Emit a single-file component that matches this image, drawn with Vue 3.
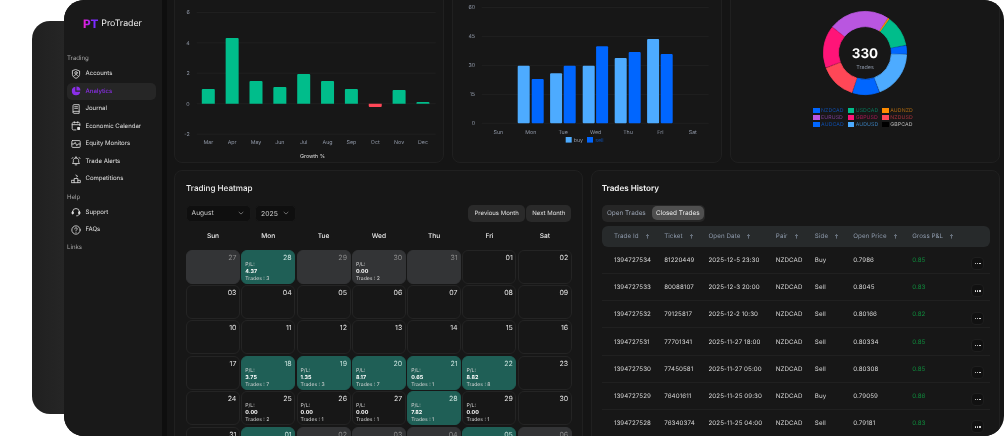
<script setup>
const navTrading = [
  { label: 'Accounts', icon: 'accounts' },
  { label: 'Analytics', icon: 'analytics', active: true },
  { label: 'Journal', icon: 'journal' },
  { label: 'Economic Calendar', icon: 'calendar' },
  { label: 'Equity Monitors', icon: 'equity' },
  { label: 'Trade Alerts', icon: 'alerts' },
  { label: 'Competitions', icon: 'competitions' },
]
const navHelp = [
  { label: 'Support', icon: 'support' },
  { label: 'FAQs', icon: 'faq' },
]

const growthGrid = [
  { v: '6', y: 12.5 }, { v: '4', y: 42.8 }, { v: '2', y: 73.2 }, { v: '0', y: 103.7 }, { v: '-2', y: 134.2 },
]
const growthBars = [
  ['Mar', 89], ['Apr', 38], ['May', 81], ['Jun', 87], ['Jul', 74], ['Aug', 81], ['Sep', 89], ['Oct', 107], ['Nov', 90], ['Dec', 102],
].map(([m, t], i) => ({ m, t, x: 208.6 + i * 23.85 }))

const dayGrid = [
  { v: '60', y: 7.5 }, { v: '45', y: 36.4 }, { v: '30', y: 65.4 }, { v: '15', y: 94.4 }, { v: '0', y: 123.3 },
]
const dayLabels = ['Sun', 'Mon', 'Tue', 'Wed', 'Thu', 'Fri', 'Sat'].map((d, i) => ({ d, x: 498.7 + i * 32.4 }))
const dayBars = [
  { x: 518, t: 65.7, c: '#4dabff' }, { x: 532, t: 79, c: '#0066ff' },
  { x: 550.4, t: 73.3, c: '#4dabff' }, { x: 564, t: 65.7, c: '#0066ff' },
  { x: 583, t: 65.7, c: '#4dabff' }, { x: 596.4, t: 46.3, c: '#0066ff' },
  { x: 615, t: 58, c: '#4dabff' }, { x: 629, t: 52, c: '#0066ff' },
  { x: 647.4, t: 39, c: '#4dabff' }, { x: 661, t: 54, c: '#0066ff' },
]

function polar(r, deg) {
  const a = ((deg - 90) * Math.PI) / 180
  return `${(45 + r * Math.cos(a)).toFixed(2)} ${(45 + r * Math.sin(a)).toFixed(2)}`
}
function arc(from, to, ro, ri) {
  const large = to - from > 180 ? 1 : 0
  return `M${polar(ro, from)}A${ro} ${ro} 0 ${large} 1 ${polar(ro, to)}L${polar(ri, to)}A${ri} ${ri} 0 ${large} 0 ${polar(ri, from)}Z`
}
const donut = [
  [-51, 33, '#b956e0'], [33.9, 35.4, '#ff8c00'], [36.2, 78.5, '#00bd8b'], [80, 91, '#0066ff'], [92.5, 159, '#4dabff'],
  [160.5, 197, '#0066ff'], [198.5, 248.5, '#ff4757'], [250, 308, '#ff1478'],
].map(([a, b, c]) => ({ c, d: arc(a, b, 41.6, 26.4) }))

const legend = [
  ['NZDCAD', '#0066ff', '#0e4fb0'], ['USDCAD', '#00bd8b', '#067a5c'], ['AUDNZD', '#ff8c00', '#b06a10'],
  ['EURUSD', '#b956e0', '#7d3f98'], ['GBPUSD', '#ff1478', '#a81a56'], ['NZDUSD', '#ff4757', '#a8323c'],
  ['AUDCAD', '#0066ff', '#0e4fb0'], ['AUDUSD', '#4dabff', '#3a7db8'], ['GBPCAD', '#000000', '#bdbdbd'],
].map(([name, swatch, text]) => ({ name, swatch, text }))

const weekdays = ['Sun', 'Mon', 'Tue', 'Wed', 'Thu', 'Fri', 'Sat']
const cell = (d, kind = '', pl = null, tr = null) => ({ d, kind, pl, tr })
const cells = [
  cell('27', 'muted'), cell('28', 'win', '4.37', 3), cell('29', 'muted'), cell('30', 'muted', '0.00', 2), cell('31', 'muted'), cell('01'), cell('02'),
  cell('03'), cell('04'), cell('05'), cell('06'), cell('07'), cell('08'), cell('09'),
  cell('10'), cell('11'), cell('12'), cell('13'), cell('14'), cell('15'), cell('16'),
  cell('17'), cell('18', 'win', '3.75', 7), cell('19', 'win', '1.35', 3), cell('20', 'win', '8.17', 7), cell('21', 'win', '0.65', 1), cell('22', 'win', '8.82', 8), cell('23'),
  cell('24'), cell('25', '', '0.00', 2), cell('26', '', '0.00', 1), cell('27', '', '0.00', 1), cell('28', 'win', '7.82', 1), cell('29', '', '0.00', 1), cell('30'),
  cell('31'), cell('01', 'win'), cell('02', 'muted'), cell('03', 'muted'), cell('04', 'muted'), cell('05', 'win'), cell('06', 'muted'),
]

const columns = ['Trade Id', 'Ticket', 'Open Date', 'Pair', 'Side', 'Open Price', 'Gross P&L']
const trades = [
  ['1394727534', '81220449', '2025-12-5 23:30', 'NZDCAD', 'Buy', '0.7986', '0.85'],
  ['1394727533', '80088107', '2025-12-3 20:00', 'NZDCAD', 'Sell', '0.8045', '0.83'],
  ['1394727532', '79125817', '2025-12-2 10:30', 'NZDCAD', 'Sell', '0.80166', '0.82'],
  ['1394727531', '77701341', '2025-11-27 18:00', 'NZDCAD', 'Sell', '0.80334', '0.85'],
  ['1394727530', '77450581', '2025-11-27 05:00', 'NZDCAD', 'Sell', '0.80308', '0.85'],
  ['1394727529', '76401611', '2025-11-25 09:30', 'NZDCAD', 'Buy', '0.79059', '0.86'],
  ['1394727528', '76340374', '2025-11-25 04:00', 'NZDCAD', 'Sell', '0.79181', '0.83'],
]
</script>

<template>
  <div class="stage">
    <div class="back-window"></div>
    <div class="window">
      <aside class="sidebar">
        <div class="logo"><span class="logo-mark">PT</span><span class="logo-name">ProTrader</span></div>
        <div class="section first">Trading</div>
        <div v-for="n in navTrading" :key="n.label" class="nav" :class="{ active: n.active }">
          <svg class="ico" viewBox="0 0 12 12" fill="none" stroke="currentColor" stroke-width="1" stroke-linecap="round" stroke-linejoin="round">
            <template v-if="n.icon === 'accounts'">
              <path d="M6 .8 10.3 2.4V6.4C10.3 8.8 8.3 10.4 6 11.2 3.7 10.4 1.7 8.8 1.7 6.4V2.4Z" />
              <circle cx="6" cy="4.6" r="1.5" />
              <path d="M3.6 8.4C4.2 7.2 5 6.8 6 6.8S7.8 7.2 8.4 8.4" />
            </template>
            <template v-else-if="n.icon === 'analytics'">
              <path d="M5.2.9A5.1 5.1 0 1 0 11.1 6.8H5.2Z" fill="currentColor" stroke="none" />
              <path d="M6.5.7A4.9 4.9 0 0 1 11.3 5.5H6.5Z" fill="currentColor" stroke="none" />
            </template>
            <template v-else-if="n.icon === 'journal'">
              <path d="M2.4 9.6V1.9C2.4 1.2 2.9.8 3.5.8H9.8V11.2H3.5C2.9 11.2 2.4 10.6 2.4 9.9S2.9 8.8 3.5 8.8H9.8" />
              <path d="M4.4 3.2H7.8M4.4 5.2H7.8" />
            </template>
            <template v-else-if="n.icon === 'calendar'">
              <path d="M6 10.7H3C2 10.7 1.4 10 1.4 9.1V3.2C1.4 2.3 2 1.7 3 1.7H9C10 1.7 10.6 2.3 10.6 3.2V5.6" />
              <path d="M1.4 4.4H10.6M3.9.8V2.4M8.1.8V2.4" />
              <rect x="7.4" y="7.3" width="3.4" height="3.4" rx=".7" fill="currentColor" stroke="none" />
            </template>
            <template v-else-if="n.icon === 'equity'">
              <rect x="1" y="1.9" width="10" height="8.2" rx="1" />
              <path d="M1 6H3.6L5 4 7 8 8.4 6H11" />
            </template>
            <template v-else-if="n.icon === 'alerts'">
              <path d="M6 2.2C8 2.2 9.2 3.7 9.2 5.4V7.4L10.2 9H1.8L2.8 7.4V5.4C2.8 3.7 4 2.2 6 2.2Z" />
              <path d="M5 10.6H7M1.2 3 2.2 1.8M10.8 3 9.8 1.8M6 .8V2.2" />
            </template>
            <template v-else>
              <path d="M.8 10.4H11.2V7.6H8.2V5.4H3.8V7.6H.8Z" />
              <path d="M3.8 10.4V7.6M8.2 10.4V7.6M6 1.2 6.7 2.5 8 2.7 7 3.6" />
            </template>
          </svg>
          <span>{{ n.label }}</span>
        </div>
        <div class="section">Help</div>
        <div v-for="n in navHelp" :key="n.label" class="nav">
          <svg class="ico" viewBox="0 0 12 12" fill="none" stroke="currentColor" stroke-width="1" stroke-linecap="round" stroke-linejoin="round">
            <template v-if="n.icon === 'support'">
              <path d="M2 8V5.8A4 4 0 0 1 10 5.8V8" />
              <path d="M10 8C10 9.7 8.6 10.6 6.8 10.6" />
              <rect x="1.2" y="5.6" width="1.6" height="2.8" rx=".7" fill="currentColor" />
              <rect x="9.2" y="5.6" width="1.6" height="2.8" rx=".7" fill="currentColor" />
            </template>
            <template v-else>
              <circle cx="6" cy="6" r="5" />
              <path d="M4.5 4.7C4.5 3.8 5.2 3.3 6 3.3S7.5 3.8 7.5 4.6C7.5 5.7 6 5.7 6 6.9" />
              <path d="M6 8.7V8.8" />
            </template>
          </svg>
          <span>{{ n.label }}</span>
        </div>
        <div class="section">Links</div>
      </aside>

      <div class="rule"></div>

      <main class="main">
        <div class="top-row">
          <section class="card">
            <svg class="chart" viewBox="175.3 -11 268 173.3" width="268" height="173.3">
              <g v-for="g in growthGrid" :key="g.v">
                <line x1="197" x2="436" :y1="g.y" :y2="g.y" class="grid" />
                <text x="190" :y="g.y + 2" text-anchor="end" class="axis">{{ g.v }}</text>
              </g>
              <g v-for="b in growthBars" :key="b.m">
                <path v-if="b.t > 103.7" :d="`M${b.x - 6.5} 103.7H${b.x + 6.5}V${b.t - 1}Q${b.x + 6.5} ${b.t} ${b.x + 5.5} ${b.t}H${b.x - 5.5}Q${b.x - 6.5} ${b.t} ${b.x - 6.5} ${b.t - 1}Z`" fill="#ff4757" />
                <path v-else :d="`M${b.x - 6.5} 103.7V${b.t + 1}Q${b.x - 6.5} ${b.t} ${b.x - 5.5} ${b.t}H${b.x + 5.5}Q${b.x + 6.5} ${b.t} ${b.x + 6.5} ${b.t + 1}V103.7Z`" fill="#00bd8b" />
                <text :x="b.x" y="144" text-anchor="middle" class="axis">{{ b.m }}</text>
              </g>
              <text x="312.8" y="158" text-anchor="middle" class="axis-title">Growth %</text>
            </svg>
          </section>
          <section class="card">
            <svg class="chart" viewBox="453.3 -11 268 173.3" width="268" height="173.3">
              <g v-for="g in dayGrid" :key="g.v">
                <line x1="482" x2="709" :y1="g.y" :y2="g.y" class="grid" />
                <text x="475.4" :y="g.y + 2" text-anchor="end" class="axis">{{ g.v }}</text>
              </g>
              <rect v-for="(b, i) in dayBars" :key="i" :x="b.x" :y="b.t" width="12" :height="123.3 - b.t" rx="1" :fill="b.c" />
              <text v-for="l in dayLabels" :key="l.d" :x="l.x" y="134" text-anchor="middle" class="axis">{{ l.d }}</text>
              <rect x="566" y="137" width="6" height="5.6" fill="#4dabff" />
              <text x="574" y="142.2" class="axis">buy</text>
              <rect x="587.3" y="137" width="6" height="5.6" fill="#0066ff" />
              <text x="595.5" y="142.2" class="axis sell">sell</text>
            </svg>
          </section>
          <section class="card donut-card">
            <svg class="donut" viewBox="0 0 90 90" width="90" height="90">
              <path v-for="(s, i) in donut" :key="i" :d="s.d" :fill="s.c" :stroke="s.c" stroke-width=".8" stroke-linejoin="round" />
              <text x="45" y="49.8" text-anchor="middle" class="donut-num">330</text>
              <text x="45" y="60.6" text-anchor="middle" class="donut-sub">Trades</text>
            </svg>
            <div class="legend">
              <div v-for="l in legend" :key="l.name" class="legend-item">
                <i class="swatch" :style="{ background: l.swatch }"></i>
                <span :style="{ color: l.text }">{{ l.name }}</span>
              </div>
            </div>
          </section>
        </div>

        <div class="bottom-row">
          <section class="card heat">
            <h2 class="title">Trading Heatmap</h2>
            <div class="toolbar">
              <div class="select month">August
                <svg viewBox="0 0 8 8" width="6" height="6" fill="none" stroke="#8a8a8a" stroke-width="1"><path d="M1 2.6 4 5.4 7 2.6" /></svg>
              </div>
              <div class="select year">2025
                <svg viewBox="0 0 8 8" width="6" height="6" fill="none" stroke="#8a8a8a" stroke-width="1"><path d="M1 2.6 4 5.4 7 2.6" /></svg>
              </div>
              <div class="btns">
                <div class="btn prev">Previous Month</div>
                <div class="btn next">Next Month</div>
              </div>
            </div>
            <div class="weekdays">
              <div v-for="w in weekdays" :key="w">{{ w }}</div>
            </div>
            <div class="cal">
              <div v-for="(c, i) in cells" :key="i" class="day" :class="c.kind">
                <div class="date">{{ c.d }}</div>
                <template v-if="c.pl">
                  <div class="pl">P/L:</div>
                  <div class="val">{{ c.pl }}</div>
                  <div class="pl">Trades : {{ c.tr }}</div>
                </template>
              </div>
            </div>
          </section>

          <section class="card history">
            <h2 class="title">Trades History</h2>
            <div class="tabs">
              <div class="tab">Open Trades</div>
              <div class="tab on">Closed Trades</div>
            </div>
            <div class="thead trow">
              <div v-for="c in columns" :key="c" class="th">
                {{ c }}
                <svg viewBox="0 0 8 8" width="5" height="5" fill="none" stroke="currentColor" stroke-width="1"><path d="M4 7.4V1M1.6 3.2 4 .9 6.4 3.2" /></svg>
              </div>
            </div>
            <div v-for="t in trades" :key="t[0]" class="tbody trow">
              <div v-for="(v, i) in t" :key="i" :class="{ gain: i === 6 }">{{ v }}</div>
              <div class="more"><i></i><i></i><i></i></div>
            </div>
          </section>
        </div>
      </main>
    </div>
  </div>
</template>

<style>
html, body { margin: 0; background: #fff; overflow: hidden; }
</style>

<style scoped>
.stage { position: relative; width: 1004px; height: 436px; overflow: hidden; background: #fff; font-family: Inter, "Liberation Sans", sans-serif; color: #e6e6e6; text-rendering: geometricPrecision; }
.back-window { position: absolute; left: 32px; top: 20.5px; width: 200px; height: 393.5px; border-radius: 18px; background: linear-gradient(90deg, #202020, #2a2a2a 30%, #1c1c1c); }
.window { position: absolute; left: 64px; top: 0; width: 940px; height: 436px; border-radius: 20px; overflow: hidden; display: flex; background: #151515; will-change: transform; }

.sidebar { width: 98px; flex: none; background: #191919; padding: 0 6px 0 3px; box-sizing: border-box; }
.logo { padding: 16px 0 0 16px; box-sizing: border-box; display: flex; align-items: center; height: 31.5px; gap: 3px; margin-bottom: 21px; }
.logo-mark { font-size: 11.8px; font-weight: 800; letter-spacing: -.2px; background: linear-gradient(90deg, #f01fd0, #7a2bff 70%); -webkit-background-clip: text; background-clip: text; color: transparent; }
.logo-name { font-size: 8.8px; font-weight: 400; color: #f2f2f2; }
.section { font-size: 6.1px; color: #a8a8a8; height: 15.75px; padding-top: 2px; box-sizing: border-box; line-height: 15.75px; }
.section.first { height: 12.5px; line-height: 12.5px; padding-top: 0; }
.nav { height: 17.5px; display: flex; align-items: center; gap: 4.5px; padding-left: 4px; font-size: 6.05px; color: #e0e0e0; border-radius: 5px; }
.nav.active { background: #262626; color: #8a2ee8; font-weight: 500; }
.ico { width: 10px; height: 10px; flex: none; }

.rule { width: 5px; flex: none; background: #0e0e0e; }
.main { flex: 1; min-width: 0; padding: 0 4.7px 0 7.3px; display: flex; flex-direction: column; gap: 6.7px; }

.card { box-sizing: border-box; background: #171717; border: 1px solid #202020; border-radius: 8px; }
.top-row { display: flex; gap: 8px; height: 163.3px; }
.top-row .card { width: 270px; height: 175.3px; margin-top: -12px; flex: none; }
.chart { display: block; }
.grid { stroke: #222; stroke-width: .8; }
.axis { font-size: 5.3px; fill: #9199a8; }
.axis.sell { fill: #0e4fb0; }
.axis-title { font-size: 5.3px; fill: #e0e0e0; }

.donut-card { display: flex; flex-direction: column; align-items: center; padding-top: 19px; }
.donut { display: block; flex: none; }
.donut-num { font-size: 13.4px; font-weight: 700; fill: #fff; }
.donut-sub { font-size: 5.4px; fill: #8d97a8; }
.legend { display: grid; grid-template-columns: 34.6px 34.6px 31px; row-gap: 0; margin-top: 9px; margin-right: 4px; }
.legend-item { height: 7px; display: flex; align-items: center; gap: 1.6px; font-size: 5.2px; letter-spacing: .1px; white-space: nowrap; }
.swatch { width: 6.3px; height: 5px; flex: none; }

.bottom-row { display: flex; gap: 7.4px; }
.heat { width: 409px; height: 290px; padding: 12px 10.7px 0; flex: none; }
.history { width: 409.3px; height: 290px; padding: 12px 10px 0; flex: none; }
.title { margin: 0; font-size: 8.1px; line-height: 11px; font-weight: 500; color: #ededed; }
.history .title { font-weight: 600; color: #f2f2f2; }

.toolbar { margin-top: 10.7px; height: 17.4px; display: flex; gap: 4.5px; }
.select { height: 17.4px; box-sizing: border-box; background: #0f0f0f; border: 1px solid #181818; border-radius: 5px; font-size: 6.6px; color: #cfcfcf; display: flex; align-items: center; justify-content: space-between; padding: 0 6px 0 4.6px; }
.month { width: 65px; }
.year { width: 40.6px; font-size: 6.8px; }
.btns { margin-left: auto; display: flex; gap: 1.3px; margin-right: .3px; }
.btn { height: 17.6px; background: #2a2a2a; border-radius: 5px; font-size: 6px; color: #e2e2e2; display: flex; align-items: center; justify-content: center; }
.prev { width: 56.7px; }
.next { width: 45px; }

.weekdays { display: grid; grid-template-columns: repeat(7, 54px); column-gap: 1.3px; margin-top: 6.5px; height: 14px; line-height: 14px; text-align: center; font-size: 6.6px; font-weight: 500; color: #ebebeb; }
.cal { display: grid; grid-template-columns: repeat(7, 54px); grid-auto-rows: 34px; gap: 1.4px 1.3px; margin-top: 7px; }
.day { box-sizing: border-box; border: 1px solid #242424; border-radius: 6px; padding: 3px 2.6px 0 3px; overflow: hidden; }
.day.muted { background: #333436; border-color: #333436; }
.day.win { background: #1f5f56; border-color: #1f5f56; }
.date { text-align: right; font-size: 7px; line-height: 8px; color: #e8e8e8; height: 8px; }
.muted .date { color: #8c8c8c; }
.win .date { color: #c9e2dd; }
.pl { font-size: 5.1px; line-height: 7px; color: #d6d6d6; }
.val { font-size: 5.4px; line-height: 7px; font-weight: 700; color: #fff; }

.tabs { margin-top: 10.7px; width: 103.4px; height: 17.4px; background: #262626; border-radius: 5px; display: flex; align-items: center; padding: 0 1.3px 0 5.2px; box-sizing: border-box; justify-content: space-between; }
.tab { font-size: 6.4px; color: #9aa3b2; height: 14px; line-height: 14px; }
.tab.on { width: 52px; background: #4f4f4f; color: #ececec; text-align: center; border-radius: 5px; }

.trow { display: grid; grid-template-columns: 50.3px 44.3px 67.4px 39px 38.3px 59px 59px 14px; padding-left: 12.2px; box-sizing: border-box; width: 388px; align-items: center; }
.thead { margin-top: 3.7px; height: 21px; background: #272a2b; border-radius: 6px; color: #8f9bad; font-size: 6.2px; letter-spacing: .1px; }
.th { display: flex; align-items: center; gap: 6px; white-space: nowrap; }
.tbody { height: 27.2px; padding-top: 1.4px; border-bottom: 1px solid #202020; font-size: 6.2px; color: #d8d8d8; letter-spacing: .08px; white-space: nowrap; }
.gain { color: #0f8a3c; }
.more { width: 13px; height: 13px; box-sizing: border-box; background: #111; border: 1px solid #1e1e1e; border-radius: 4px; display: flex; align-items: center; justify-content: center; gap: 1px; margin-top: 6.5px; }
.more i { width: 1.3px; height: 1.3px; background: #f0f0f0; border-radius: 50%; display: block; }
</style>
